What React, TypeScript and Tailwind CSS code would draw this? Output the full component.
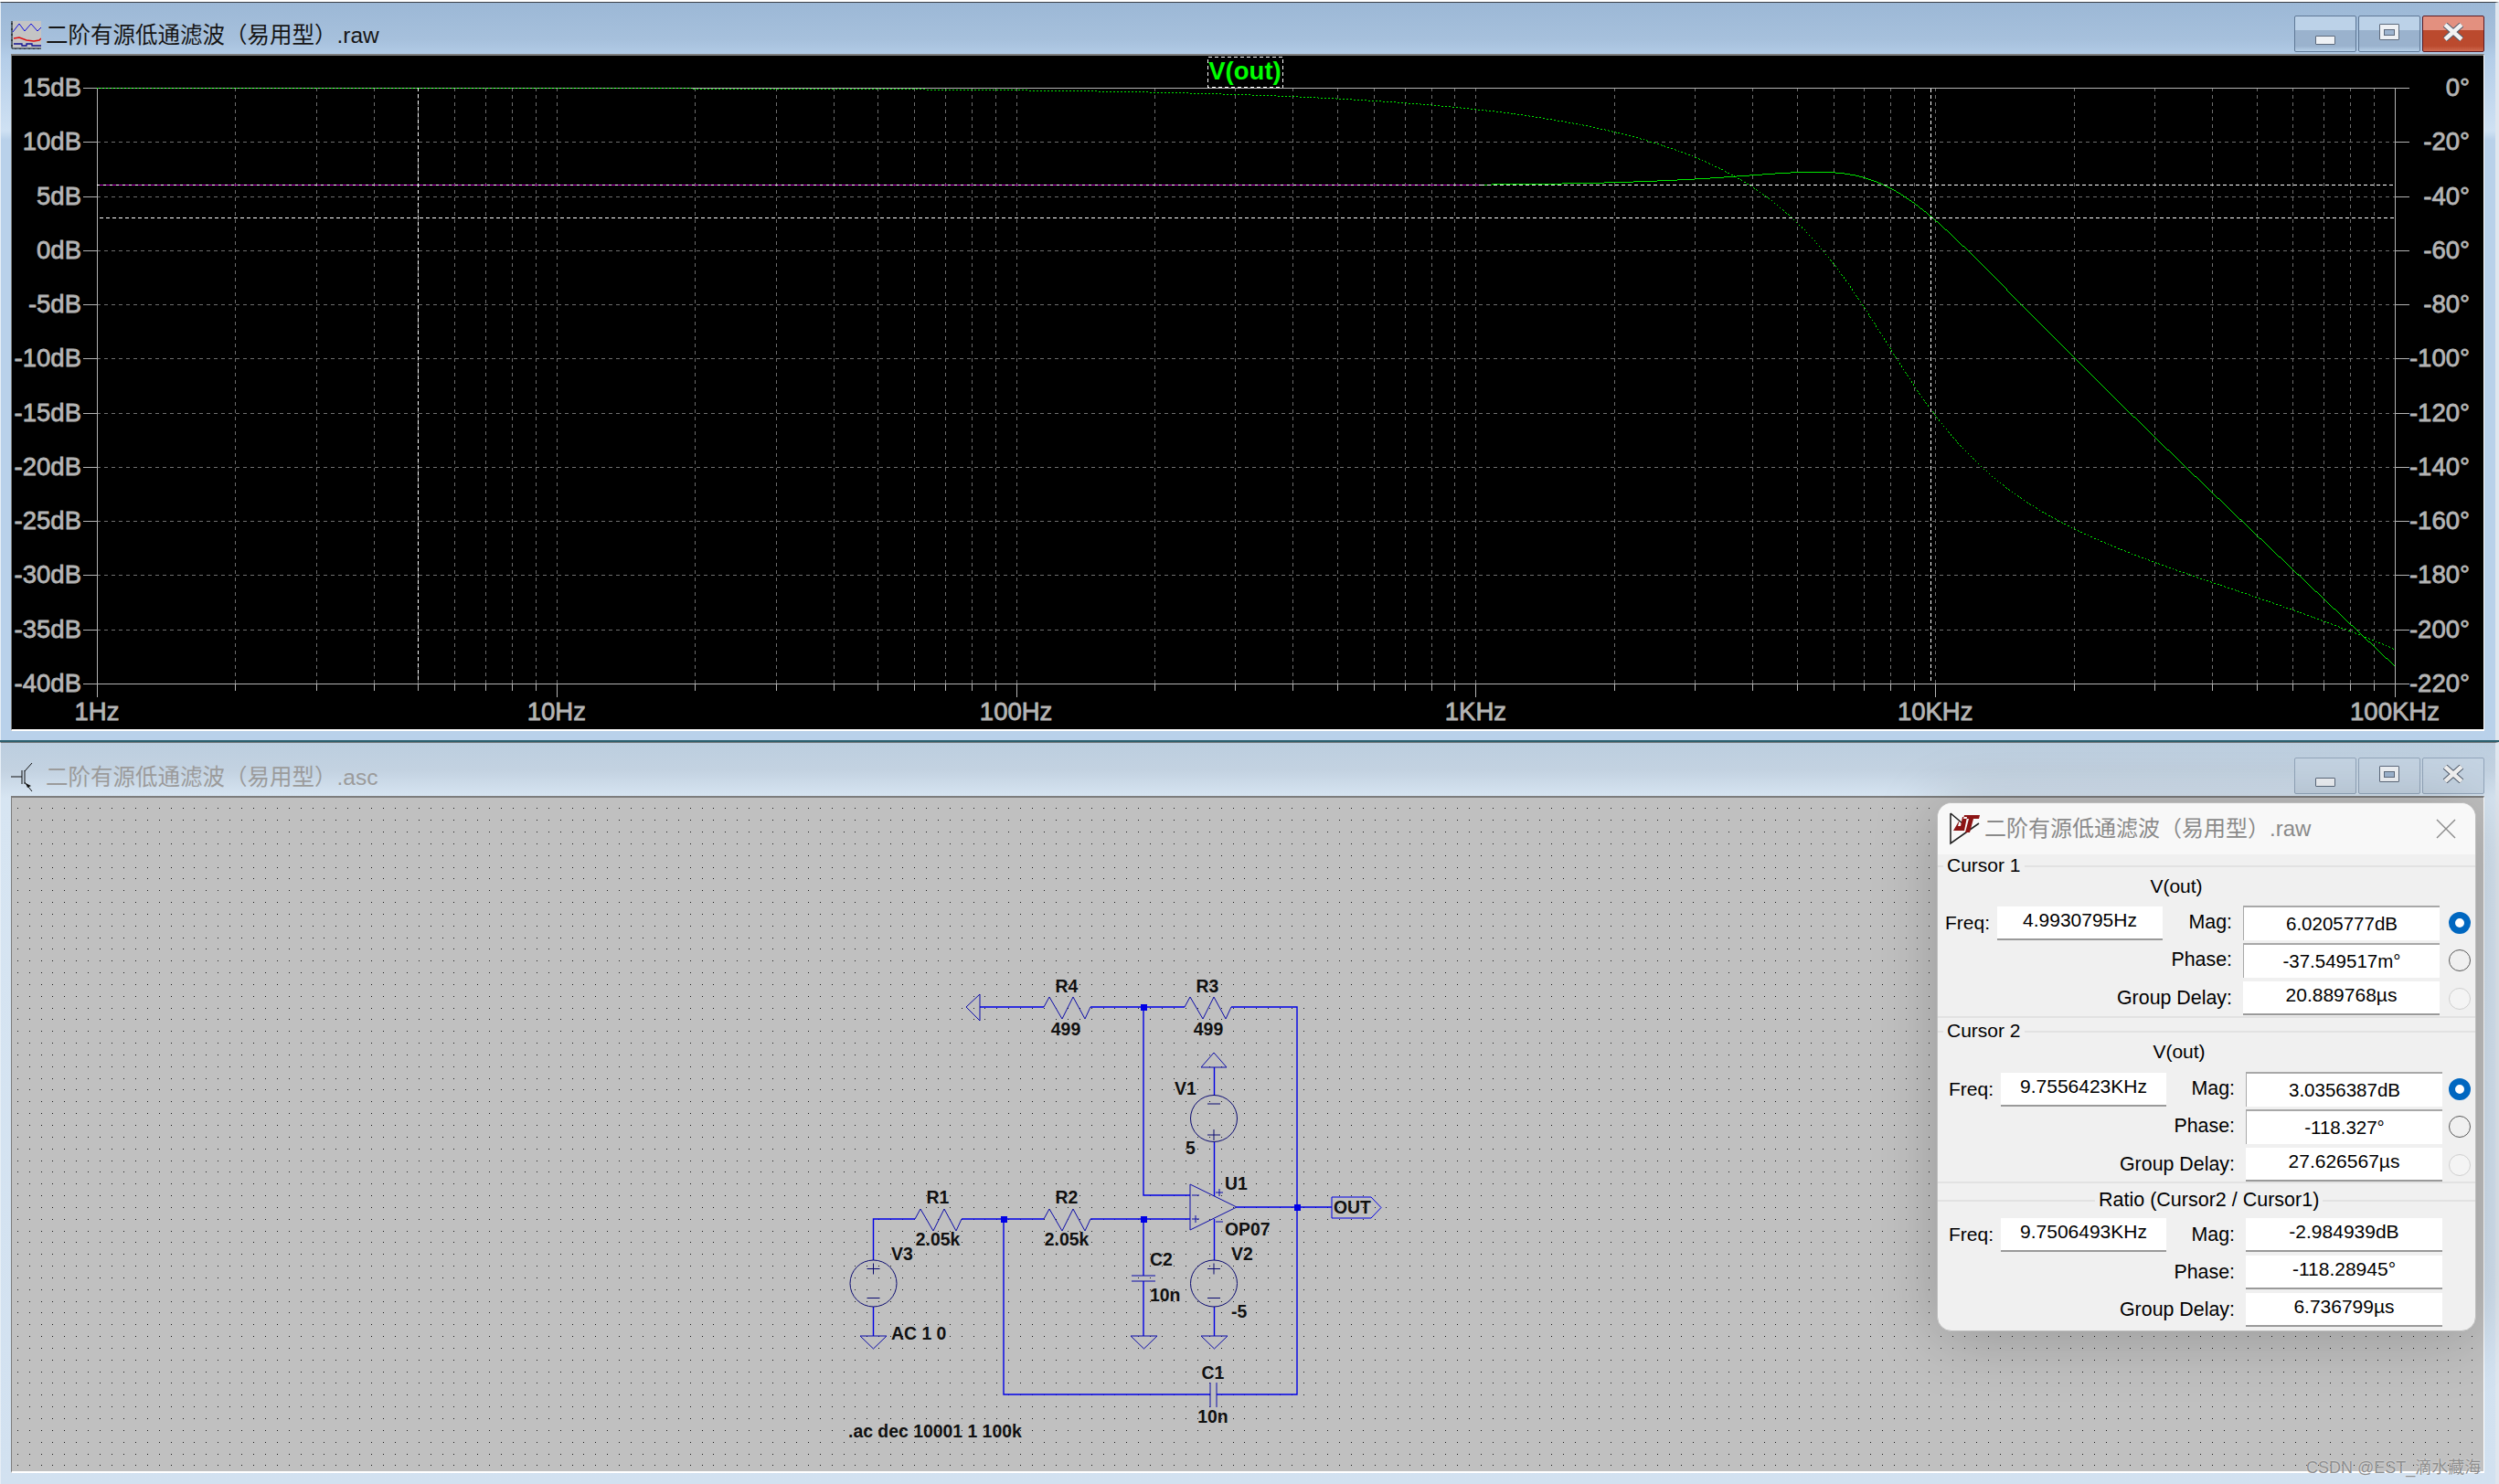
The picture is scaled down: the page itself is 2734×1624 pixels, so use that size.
import { ReactNode } from 'react';

const FONT = '"Liberation Sans", "Noto Sans CJK SC", sans-serif';

// plot geometry, in page pixels
const PLOT = { left: 106, right: 2620, top: 96, bottom: 748 };
const DECADE = (PLOT.right - PLOT.left) / 5;
const DB_STEP = (PLOT.bottom - PLOT.top) / 11;

const dbLabels = ['15dB', '10dB', '5dB', '0dB', '-5dB', '-10dB', '-15dB', '-20dB', '-25dB', '-30dB', '-35dB', '-40dB'];
const degLabels = ['0°', '-20°', '-40°', '-60°', '-80°', '-100°', '-120°', '-140°', '-160°', '-180°', '-200°', '-220°'];
const freqLabels = ['1Hz', '10Hz', '100Hz', '1KHz', '10KHz', '100KHz'];

const freqAt = (x: number) => Math.pow(10, (x - PLOT.left) / DECADE);

const magY = (f: number) => {
  const w = f / 7763;
  const h = 2 / Math.sqrt((1 - w * w) ** 2 + w * w);
  return PLOT.top + 0.5 + (15 - 20 * Math.log10(h)) * (DB_STEP / 5);
};

const phaseY = (f: number) => {
  const w = f / 7763;
  const extra = (0.37 * f) / 1000 / (1 + f / 600000);
  const deg = (Math.atan2(w, 1 - w * w) * 180) / Math.PI + extra;
  return PLOT.top + 0.5 + deg * (DB_STEP / 20);
};

const trace = (fn: (f: number) => number, from: number) => {
  const pts: string[] = [];
  for (let x = from; x <= PLOT.right; x++) pts.push(`${x},${fn(freqAt(x)).toFixed(1)}`);
  return pts.join(' ');
};

const minorXs: number[] = [];
const decadeXs: number[] = [];
for (let d = 0; d < 5; d++) {
  decadeXs.push(PLOT.left + d * DECADE);
  for (let m = 2; m <= 9; m++) minorXs.push(Math.round(PLOT.left + (d + Math.log10(m)) * DECADE));
}
decadeXs.push(PLOT.right);

const AcPlot = () => (
  <svg viewBox="13 61 2704 737" className="block w-full h-full bg-black" fontFamily={FONT}>
    <g shapeRendering="crispEdges" strokeWidth="1">
      {/* grid */}
      {dbLabels.slice(1, -1).map((_, i) => {
        const y = Math.round(PLOT.top + (i + 1) * DB_STEP) + 0.5;
        return <line key={i} x1={PLOT.left} x2={PLOT.right} y1={y} y2={y} stroke="#6e6e6e" strokeDasharray="4 4" />;
      })}
      {[...minorXs, ...decadeXs.slice(1, -1)].map(x => {
        const px = Math.round(x) + 0.5;
        return (
          <g key={x}>
            <line x1={px} x2={px} y1={PLOT.top} y2={PLOT.bottom} stroke="#6e6e6e" strokeDasharray="4 4" />
            <line x1={px} x2={px} y1={PLOT.bottom} y2={decadeXs.includes(x) ? 763 : 756} stroke="#b4b4b4" />
          </g>
        );
      })}
      {/* axes */}
      <line x1={91} x2={2636} y1={96.5} y2={96.5} stroke="#b4b4b4" />
      <line x1={91} x2={2636} y1={748.5} y2={748.5} stroke="#b4b4b4" />
      <line x1={106.5} x2={106.5} y1={96} y2={763} stroke="#b4b4b4" />
      <line x1={2620.5} x2={2620.5} y1={96} y2={763} stroke="#b4b4b4" />
      {dbLabels.map((_, i) => {
        const y = Math.round(PLOT.top + i * DB_STEP) + 0.5;
        return (
          <g key={i}>
            <line x1={91} x2={106} y1={y} y2={y} stroke="#b4b4b4" />
            <line x1={2620} x2={2636} y1={y} y2={y} stroke="#b4b4b4" />
          </g>
        );
      })}
      {/* traces */}
      <polyline points={trace(phaseY, 106)} fill="none" stroke="#00ff00" strokeWidth="0.9" strokeDasharray="2 2" />
      <line x1={106} x2={1620} y1={202.5} y2={202.5} stroke="#c000c0" />
      <polyline points={trace(magY, 1620)} fill="none" stroke="#00ff00" strokeWidth="0.9" />
      {/* cursors */}
      <line x1={106} x2={1620} y1={202.5} y2={202.5} stroke="#ffffff" strokeDasharray="3 4" />
      <line x1={1620} x2={2620} y1={202.5} y2={202.5} stroke="#ffffff" strokeDasharray="4 3" />
      <line x1={109} x2={2620} y1={238.5} y2={238.5} stroke="#ffffff" strokeDasharray="4 3" />
      <line x1={457.5} x2={457.5} y1={96} y2={746} stroke="#ffffff" strokeDasharray="4 3" />
      <line x1={2112.5} x2={2112.5} y1={97} y2={746} stroke="#ffffff" strokeDasharray="4 3" />
      <rect x={1321.5} y={62.5} width={82} height={33} fill="none" stroke="#ffffff" strokeDasharray="4 3" />
    </g>
    <g fill="#b4b4b4" stroke="#b4b4b4" strokeWidth="0.8" fontSize="27.5">
      {dbLabels.map((t, i) => (
        <text key={t} x={89} y={PLOT.top + i * DB_STEP + 9} textAnchor="end">{t}</text>
      ))}
      {degLabels.map((t, i) => (
        <text key={t} x={2702} y={PLOT.top + i * DB_STEP + 9} textAnchor="end">{t}</text>
      ))}
      {freqLabels.map((t, i) => (
        <text key={t} x={PLOT.left + i * DECADE} y={788} textAnchor="middle">{t}</text>
      ))}
    </g>
    <text x={1362} y={87} textAnchor="middle" fontSize="27.5" fontWeight="700" fill="#00ff00">V(out)</text>
  </svg>
);

// schematic dots are not on a whole-pixel pitch, so a tiled pattern would blur
let dotPath = '';
for (let r = 0; r < 57; r++) {
  for (let c = 0; c < 210; c++) {
    dotPath += `M${Math.round(18.75 + c * 12.911)} ${Math.round(884.3 + r * 12.84)}h1v1h-1z`;
  }
}

const WIRE = '#0000e6';
const SYM = '#0c0ca8';
const ELLIPSE = '#0a0a70';

const Resistor = ({ x, y }: { x: number; y: number }) => (
  <polyline
    points={`${x},${y} ${x + 6},${y - 11} ${x + 20},${y + 13} ${x + 32},${y - 11} ${x + 45},${y + 13} ${x + 51},${y}`}
    fill="none"
    stroke={SYM}
  />
);

const Gnd = ({ x, y }: { x: number; y: number }) => (
  <polygon points={`${x - 14.5},${y} ${x + 14.5},${y} ${x},${y + 14}`} fill="none" stroke={SYM} />
);

const Source = ({ x, y, flip }: { x: number; y: number; flip?: boolean }) => {
  const plusY = flip ? y + 18 : y - 16;
  const minusY = flip ? y - 16 : y + 16;
  return (
    <g fill="none" stroke={ELLIPSE}>
      <circle cx={x} cy={y} r={25.5} />
      <path d={`M${x - 7} ${plusY}h14M${x} ${plusY - 6}v12M${x - 7} ${minusY}h14`} />
    </g>
  );
};

const Dot = ({ x, y }: { x: number; y: number }) => <rect x={x - 3} y={y - 3} width={7} height={7} fill="#0000e6" />;

const Label = ({ x, y, mid, children }: { x: number; y: number; mid?: boolean; children: ReactNode }) => (
  <text x={x} y={y} textAnchor={mid ? 'middle' : 'start'}>{children}</text>
);

const Schematic = () => (
  <svg viewBox="13 873 2704 737" className="block w-full h-full" fontFamily={FONT}>
    <path d={dotPath} fill="#1c1c1c" shapeRendering="crispEdges" />
    {/* wires */}
    <g fill="none" stroke={WIRE} strokeWidth="1.4">
      <path d="M1072 1102H1142M1193 1102H1296M1347 1102H1419V1526H1331M1324 1526H1098V1334" />
      <path d="M1251 1102V1308H1302M1353 1321H1457M955.5 1379V1334H1001M1052 1334H1142M1193 1334H1302" />
      <path d="M1251 1334V1396M1251 1402V1462M955.5 1430V1462M1328.5 1168V1199M1328.5 1250V1309M1328.5 1334V1379M1328.5 1430V1462" />
    </g>
    {/* symbols */}
    <g fill="none" stroke={SYM}>
      <polygon points="1057,1102 1072,1088 1072,1117" />
      <polygon points="1314,1168 1342,1168 1328,1152" />
      <polygon points="1302,1296 1353,1321 1302,1346" />
      <polygon points="1457,1310 1500,1310 1511,1321.5 1500,1333 1457,1333" stroke={WIRE} />
      <path d="M1238 1396h26M1238 1402h26M1324 1513v27M1331 1513v27" />
      <path d="M1304 1308h8M1304 1334h8M1308 1330v8M1330 1305h8M1334 1301v8M1330 1337h8" />
    </g>
    <Resistor x={1142} y={1102} />
    <Resistor x={1296} y={1102} />
    <Resistor x={1001} y={1334} />
    <Resistor x={1142} y={1334} />
    <Source x={1328} y={1224} flip />
    <Source x={1328} y={1404.5} />
    <Source x={955.5} y={1404.5} />
    <Gnd x={955.5} y={1462} />
    <Gnd x={1251.5} y={1462} />
    <Gnd x={1328.5} y={1462} />
    <Dot x={1251} y={1102} />
    <Dot x={1251} y={1334} />
    <Dot x={1098} y={1334} />
    <Dot x={1419} y={1321} />
    <g fontSize="19.4" fontWeight="700" fill="#101010">
      <Label x={1167} y={1086} mid>R4</Label>
      <Label x={1321} y={1086} mid>R3</Label>
      <Label x={1166} y={1133} mid>499</Label>
      <Label x={1322} y={1133} mid>499</Label>
      <Label x={1285} y={1198}>V1</Label>
      <Label x={1297} y={1263}>5</Label>
      <Label x={1340} y={1302}>U1</Label>
      <Label x={1340} y={1352}>OP07</Label>
      <Label x={1459} y={1328}>OUT</Label>
      <Label x={1347} y={1379}>V2</Label>
      <Label x={1347} y={1442}>-5</Label>
      <Label x={1026} y={1317} mid>R1</Label>
      <Label x={1167} y={1317} mid>R2</Label>
      <Label x={1026} y={1363} mid>2.05k</Label>
      <Label x={1167} y={1363} mid>2.05k</Label>
      <Label x={975} y={1379}>V3</Label>
      <Label x={975} y={1466}>AC 1 0</Label>
      <Label x={1258} y={1385}>C2</Label>
      <Label x={1258} y={1424}>10n</Label>
      <Label x={1327} y={1509} mid>C1</Label>
      <Label x={1327} y={1557} mid>10n</Label>
      <Label x={928} y={1573}>.ac dec 10001 1 100k</Label>
    </g>
  </svg>
);

const PlotIcon = () => (
  <svg width="33" height="32" viewBox="0 0 33 32" className="shrink-0">
    <rect x="2" y="1" width="31" height="29" fill="#c4c4c4" />
    <path d="M1 1v30h32M0 4h2M0 10h2M0 16h2M0 22h2M0 28h2M5 31v1M10 31v1M15 31v1M20 31v1M25 31v1M30 31v1" stroke="#111" fill="none" />
    <path d="M2 13L9 4l6 8 7-8 7 8 4-4" stroke="#1010e0" fill="none" />
    <path d="M3 20l6-1 8 3 8 1 6-1 2-2" stroke="#e01010" strokeWidth="1.5" fill="none" />
    <path d="M3 26h9v2h5v-2h6v2h10" stroke="#101090" strokeWidth="1.3" fill="none" />
  </svg>
);

const TransistorIcon = () => (
  <svg width="24" height="31" viewBox="0 0 24 31" className="shrink-0">
    <path d="M0 15h12M12 8v15M15 8v15M15 9L23 0M15 21l8 10" stroke="#111" fill="none" />
    <path d="M22 25l-6-3 2 5z" fill="#111" />
  </svg>
);

const WinGlyph = ({ kind }: { kind: 'min' | 'max' | 'close' }) => {
  if (kind === 'min') return <div className="mt-[14px] w-[22px] h-[10px] rounded-[1px] bg-[#eef1f5] border border-[#5d6a7c]" />;
  if (kind === 'max')
    return (
      <div className="mb-[4px] w-[22px] h-[18px] rounded-[1px] bg-[#eef1f5] border border-[#5d6a7c] flex items-center justify-center">
        <div className="w-[12px] h-[7px] border border-[#5d6a7c] bg-[#9db4cf]" />
      </div>
    );
  return (
    <svg width="24" height="20" viewBox="0 0 24 20" className="mb-[4px]">
      <path d="M3 2l18 16M21 2L3 18" stroke="#4e5a6b" strokeWidth="6.5" />
      <path d="M3 2l18 16M21 2L3 18" stroke="#f2f2f2" strokeWidth="4.5" />
    </svg>
  );
};

const ActiveButtons = () => (
  <div className="flex gap-[2px] mt-[14px]">
    <div className="w-[68px] h-[40px] rounded-[2px] border border-[#5f7896] flex items-center justify-center bg-[linear-gradient(#bcd2e8_0%,#bcd2e8_40%,#9ab2cd_40%,#9ab2cd_85%,#b7d0e8_100%)]">
      <WinGlyph kind="min" />
    </div>
    <div className="w-[68px] h-[40px] rounded-[2px] border border-[#5f7896] flex items-center justify-center bg-[linear-gradient(#bcd2e8_0%,#bcd2e8_40%,#9ab2cd_40%,#9ab2cd_85%,#b7d0e8_100%)]">
      <WinGlyph kind="max" />
    </div>
    <div className="w-[68px] h-[40px] rounded-[2px] border border-[#5c1a22] flex items-center justify-center bg-[linear-gradient(#e3907f_0%,#e3907f_40%,#bb4a2e_40%,#bb4a2e_85%,#cf6a50_100%)]">
      <WinGlyph kind="close" />
    </div>
  </div>
);

const InactiveButtons = () => (
  <div className="flex gap-[2px] mt-[16px]">
    {(['min', 'max', 'close'] as const).map(k => (
      <div key={k} className="w-[68px] h-[40px] rounded-[2px] border border-[#93a6bb] bg-[#c5d4e3] flex items-center justify-center">
        <WinGlyph kind={k} />
      </div>
    ))}
  </div>
);

const Radio = ({ state }: { state: 'on' | 'off' | 'dim' }) => {
  if (state === 'on') return <div className="w-[24px] h-[24px] rounded-full border-[7px] border-[#0067c0] bg-white" />;
  if (state === 'off') return <div className="w-[24px] h-[24px] rounded-full border border-[#5a5a5a] bg-[#f0f0f0]" />;
  return <div className="w-[24px] h-[24px] rounded-full border border-[#cfcfcf] bg-[#f4f4f4]" />;
};

const SunkenBox = ({ children }: { children: ReactNode }) => (
  <div className="w-[215px] h-[38px] bg-white border-t-2 border-l border-[#a8a8a8] flex items-center justify-center text-[20.5px]">
    {children}
  </div>
);

const FlatBox = ({ children, w = 'w-[215px]' }: { children: ReactNode; w?: string }) => (
  <div className={`${w} h-[37px] bg-white border-b-2 border-[#9a9a9a] flex items-center justify-center pb-[6px] text-[21px]`}>
    {children}
  </div>
);

const Row = ({ label, radio, shift, children }: { label: string; radio?: 'on' | 'off' | 'dim'; shift?: boolean; children: ReactNode }) => (
  <div className="flex items-center">
    <div className="w-[150px] text-right pr-[12px] text-[21.4px] leading-none">{label}</div>
    {children}
    <div className={`flex justify-end ${shift ? 'w-[31px]' : 'w-[34px]'}`}>{radio && <Radio state={radio} />}</div>
  </div>
);

const CursorGroup = ({ title, freq, mag, phase, delay, shift }: { title: string; freq: string; mag: string; phase: string; delay: string; shift?: boolean }) => (
  <div className={`relative h-[167px] border-y-2 border-[#e2e2e2] ${shift ? 'pl-[12px]' : 'pl-[8px]'}`}>
    <div className="absolute left-[6px] -top-[14px] bg-[#f0f0f0] px-[4px] text-[21px] leading-[24px]">{title}</div>
    <div className={`text-center text-[21px] leading-[24px] pt-[9px] ${shift ? 'w-[504px]' : 'w-[506px]'}`}>V(out)</div>
    <div className={`flex ${shift ? 'mt-[10px]' : 'mt-[9px]'}`}>
      <div className="flex items-start w-[238px] shrink-0 mt-[1px]">
        <div className="w-[57px] text-[21px] leading-none pt-[7px]">Freq:</div>
        <FlatBox w="w-[181px]">{freq}</FlatBox>
      </div>
      <div className={`flex flex-col gap-[3px] ${shift ? '-ml-[63px]' : '-ml-[62px]'}`}>
        <Row label="Mag:" radio="on" shift={shift}><SunkenBox>{mag}</SunkenBox></Row>
        <Row label="Phase:" radio="off" shift={shift}><SunkenBox>{phase}</SunkenBox></Row>
        <div className="mt-[1px]">
          <Row label="Group Delay:" radio="dim" shift={shift}><FlatBox>{delay}</FlatBox></Row>
        </div>
      </div>
    </div>
  </div>
);

const ReadoutDialog = () => (
  <div className="absolute left-[2119px] top-[878px] w-[590px] h-[579px] rounded-[16px] bg-[#f0f0f0] border border-[#bdbdbd] overflow-hidden shadow-[0_6px_70px_rgba(0,0,0,0.22)] text-black">
    <div className="h-[56px] bg-[#f8f8f8] flex items-center pl-[13px]">
      <svg width="34" height="36" viewBox="0 0 34 36" className="shrink-0">
        <path d="M1 1L14 12M1 1V34L32 12" fill="none" stroke="#222" strokeWidth="1.6" />
        <path d="M4 20h12L19 5h-5l-2 10H9l2-7zM16 3h17l-1 4h-6l-4 15h-5l4-15h-6z" fill="#8c1414" />
      </svg>
      <div className="ml-[4px] text-[24px] text-[#8a8a8a]">二阶有源低通滤波（易用型）.raw</div>
      <svg width="24" height="24" viewBox="0 0 24 24" className="ml-auto mr-[20px]">
        <path d="M2 2l20 20M22 2L2 22" stroke="#8a8a8a" strokeWidth="1.4" />
      </svg>
    </div>
    <div className="pt-[12px]">
      <CursorGroup title="Cursor 1" freq="4.9930795Hz" mag="6.0205777dB" phase="-37.549517m°" delay="20.889768µs" />
    </div>
    <div className="pt-[14px]">
      <CursorGroup title="Cursor 2" freq="9.7556423KHz" mag="3.0356387dB" phase="-118.327°" delay="27.626567µs" shift />
    </div>
    <div className="relative mt-[18px] h-[144px] border-t-2 border-[#e2e2e2] pl-[12px] pt-[18px]">
      <div className="absolute left-[172px] -top-[14px] bg-[#f0f0f0] px-[4px] text-[21.5px] leading-[24px]">Ratio (Cursor2 / Cursor1)</div>
      <div className="flex">
        <div className="flex items-start w-[238px] shrink-0">
          <div className="w-[57px] text-[21px] leading-none pt-[7px]">Freq:</div>
          <FlatBox w="w-[181px]">9.7506493KHz</FlatBox>
        </div>
        <div className="flex flex-col gap-[4px] -ml-[63px]">
          <Row label="Mag:"><FlatBox>-2.984939dB</FlatBox></Row>
          <Row label="Phase:"><FlatBox>-118.28945°</FlatBox></Row>
          <Row label="Group Delay:"><FlatBox>6.736799µs</FlatBox></Row>
        </div>
      </div>
    </div>
  </div>
);

export default function App() {
  return (
    <div className="relative w-[2734px] h-[1624px] overflow-hidden bg-white" style={{ fontFamily: FONT }}>
      {/* waveform window */}
      <div className="h-[812px] pt-[2px] border-b-2 border-[#2b5f6e]">
        <div className="h-full flex flex-col border-t border-l border-r-[4px] border-[#3c4046] border-l-[#e6eef6] border-r-[#dfe6ee] pl-[11px] pr-[12px] pb-[10px] bg-[linear-gradient(#9cb8d6_0px,#a6c0dc_40px,#b4cde8_60px,#cfe1f3_140px,#b9d1ea_150px,#b9d1ea_100%)]">
          <div className="h-[56px] shrink-0 flex items-start">
            <div className="mt-[18px] flex items-center">
              <PlotIcon />
              <div className="ml-[5px] mt-[2px] text-[24.5px] leading-[32px] text-[#161616]">二阶有源低通滤波（易用型）.raw</div>
            </div>
            <div className="ml-auto">
              <ActiveButtons />
            </div>
          </div>
          <div className="flex-1 min-h-0 border-t-2 border-l border-[#7d7d7d] border-r border-b-2 border-r-white border-b-white">
            <AcPlot />
          </div>
        </div>
      </div>
      {/* schematic window */}
      <div className="h-[812px] border-t border-[#6f7478] flex flex-col border-l border-r-[4px] border-l-[#e6eef6] border-r-[#dfe6ee] pl-[11px] pr-[12px] pb-[12px] bg-[linear-gradient(#bccedf_0px,#c3d2e1_30px,#d7e5f2_60px,#d2e1f0_100%)]">
        <div className="h-[58px] shrink-0 flex items-start">
          <div className="mt-[20px] flex items-center">
            <TransistorIcon />
            <div className="ml-[14px] mt-[2px] text-[24.5px] leading-[32px] text-[#9b9b9b]">二阶有源低通滤波（易用型）.asc</div>
          </div>
          <div className="ml-auto">
            <InactiveButtons />
          </div>
        </div>
        <div className="flex-1 min-h-0 bg-[#c0c0c0] border-t-2 border-l border-[#7d7d7d] border-r border-b-2 border-r-white border-b-white">
          <Schematic />
        </div>
      </div>
      <ReadoutDialog />
      <div className="absolute left-[2523px] top-[1595px] text-[18px] leading-[22px] whitespace-nowrap text-[#8e8e8e] [text-shadow:0_0_2px_rgba(255,255,255,0.7)]">
        CSDN @EST_滴水藏海
      </div>
    </div>
  );
}
